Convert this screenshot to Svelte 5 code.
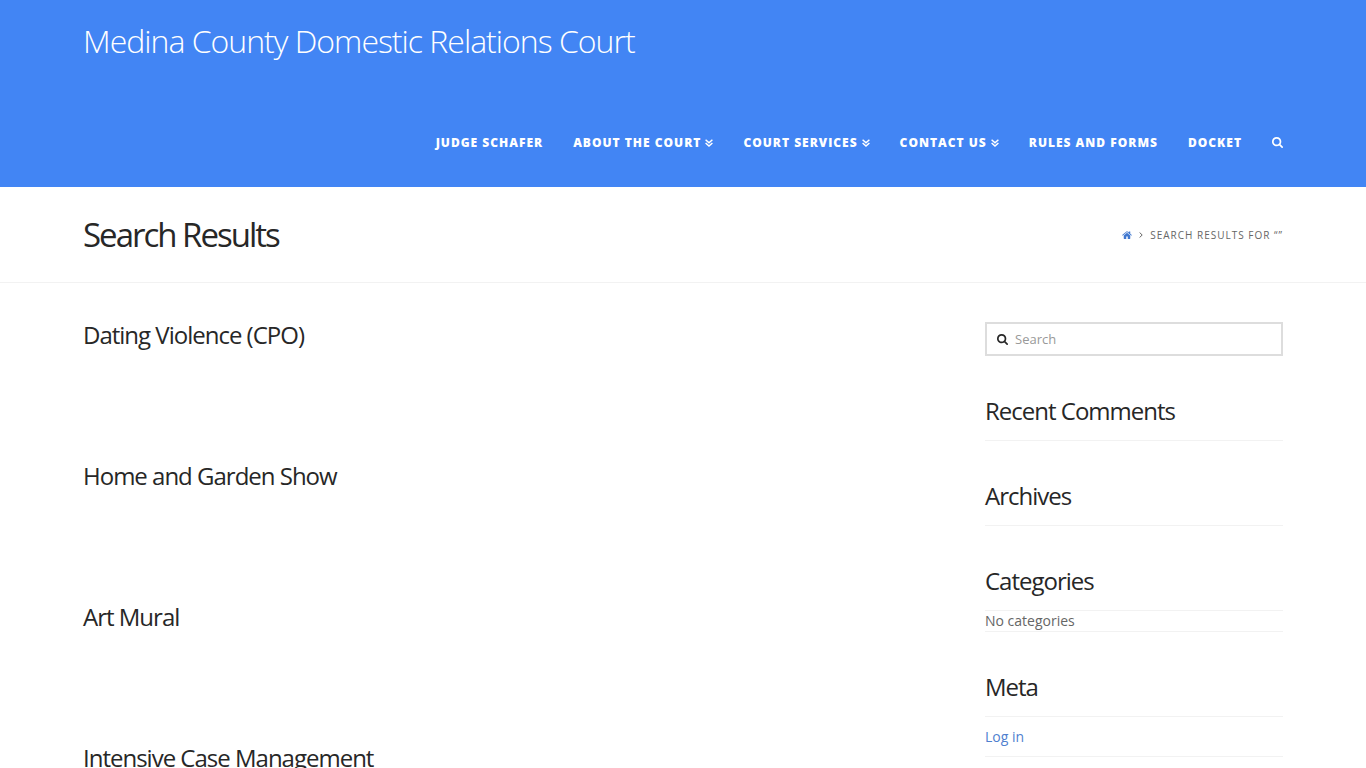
<script>
  const menu = [
    { label: 'Judge Schafer' },
    { label: 'About the Court', sub: true },
    { label: 'Court Services', sub: true },
    { label: 'Contact Us', sub: true },
    { label: 'Rules and Forms' },
    { label: 'Docket' }
  ];
  const results = ['Dating Violence (CPO)', 'Home and Garden Show', 'Art Mural', 'Intensive Case Management'];
</script>

{#snippet searchIcon(size)}
  <svg class="icon" width={size} height={size} viewBox="0 0 1664 1664" aria-hidden="true">
    <path fill="currentColor" d="M1152 704q0-185-131.500-316.500T704 256 387.500 387.500 256 704t131.500 316.500T704 1152t316.500-131.500T1152 704zm512 832q0 52-38 90t-90 38q-54 0-90-38l-343-342q-179 124-399 124-143 0-273.500-55.500t-225-150-150-225T0 704t55.500-273.500 150-225 225-150T704 0t273.500 55.500 225 150 150 225T1408 704q0 220-124 399l343 343q37 37 37 90z" />
  </svg>
{/snippet}

<header>
  <div class="container brand"><a href="#home">Medina County Domestic Relations Court</a></div>
  <nav class="container" aria-label="Main">
    {#each menu as item}
      <a href="#menu">{item.label}{#if item.sub}<svg class="chevrons" width="8" height="8" viewBox="0 0 8 8" aria-hidden="true"><path d="M.6.700 4 3.700 7.400.700M.6 4 4 7 7.400 4" fill="none" stroke="currentColor" stroke-width="1.500" /></svg>{/if}</a>
    {/each}
    <button aria-label="Search">{@render searchIcon(11)}</button>
  </nav>
</header>

<section class="landmark">
  <div class="container title-row">
    <h1>Search Results</h1>
    <div class="crumbs">
      <a href="#home" aria-label="Home"><svg class="icon" width="10" height="8" viewBox="0 0 20 16" aria-hidden="true"><path fill="currentColor" d="M10 3.600 3.500 9v6.200q0 .8.800.8H8.500v-5h3v5h4.200q.8 0 .8-.8V9zM.3 8.200 9 1q1-.8 2 0l2.500 2V1h3v4.600l3.200 2.600-1 1.200L10 2.100 1.300 9.400z" /></svg></a>
      <svg class="sep" width="4" height="6" viewBox="0 0 4 6" aria-hidden="true"><path d="M.6.500 3.200 3 .6 5.500" fill="none" stroke="currentColor" /></svg>
      <span>Search Results for “”</span>
    </div>
  </div>
</section>

<div class="container body">
  <main>
    {#each results as title}
      <article><h2><a href="#result">{title}</a></h2></article>
    {/each}
  </main>
  <aside>
    <form>
      {@render searchIcon(11)}
      <input type="text" placeholder="Search" aria-label="Search" />
    </form>
    <section><h2>Recent Comments</h2><div class="line"></div></section>
    <section><h2>Archives</h2><div class="line"></div></section>
    <section><h2>Categories</h2><ul><li>No categories</li></ul></section>
    <section><h2>Meta</h2><ul class="links"><li><a href="#login">Log in</a></li></ul></section>
  </aside>
</div>

<style>
  :global(body) {
    margin: 0;
    background: #fff;
    font-family: "Open Sans", sans-serif;
    font-size: 14px;
    color: #666;
  }
  a { color: inherit; text-decoration: none; }
  h1, h2, ul { margin: 0; padding: 0; }
  .container { width: 88%; max-width: 1200px; margin: 0 auto; }
  header { background: #4285f4; color: #fff; padding-bottom: 30px; }
  .brand {
    padding: 25px 0 70px;
    font-size: 32px;
    line-height: 32px;
    font-weight: 300;
    letter-spacing: -1px;
  }
  nav {
    display: flex;
    justify-content: flex-end;
    align-items: center;
    gap: 30px;
    height: 30px;
    font-size: 12px;
    font-weight: 800;
    letter-spacing: 1px;
    text-transform: uppercase;
    white-space: nowrap;
  }
  .chevrons { margin-left: 4px; }
  nav button { display: flex; padding: 0; border: 0; background: none; color: inherit; }
  .icon { display: block; }
  .landmark { border-bottom: 1px solid #f2f2f2; }
  .title-row { display: flex; justify-content: space-between; align-items: center; height: 95px; }
  h1 { font-size: 33px; line-height: 40px; font-weight: 400; letter-spacing: -2px; color: #272727; }
  .crumbs {
    display: flex;
    align-items: center;
    gap: 7px;
    font-size: 10px;
    letter-spacing: 1px;
    text-transform: uppercase;
  }
  .crumbs a { color: #4078d0; }
  .body { display: flex; justify-content: space-between; padding-top: 39px; }
  h2 { font-size: 24px; line-height: 26px; font-weight: 400; letter-spacing: -1px; color: #272727; }
  article { height: 141px; }
  aside { width: 298px; }
  form {
    display: flex;
    align-items: center;
    gap: 7px;
    box-sizing: border-box;
    height: 34px;
    padding: 0 10px;
    border: 2px solid #ddd;
    color: #272727;
  }
  input { flex: 1; min-width: 0; padding: 0; border: 0; outline: 0; font: 13px "Open Sans", sans-serif; }
  input::placeholder { color: #999; }
  aside section { margin-top: 42px; }
  aside h2 { margin-bottom: 16px; }
  .line { border-top: 1px solid #f2f2f2; }
  ul { list-style: none; border: solid #f2f2f2; border-width: 1px 0; }
  li { line-height: 20px; }
  .links li { line-height: 39px; }
  .links a { color: #4f7fcf; }
</style>
